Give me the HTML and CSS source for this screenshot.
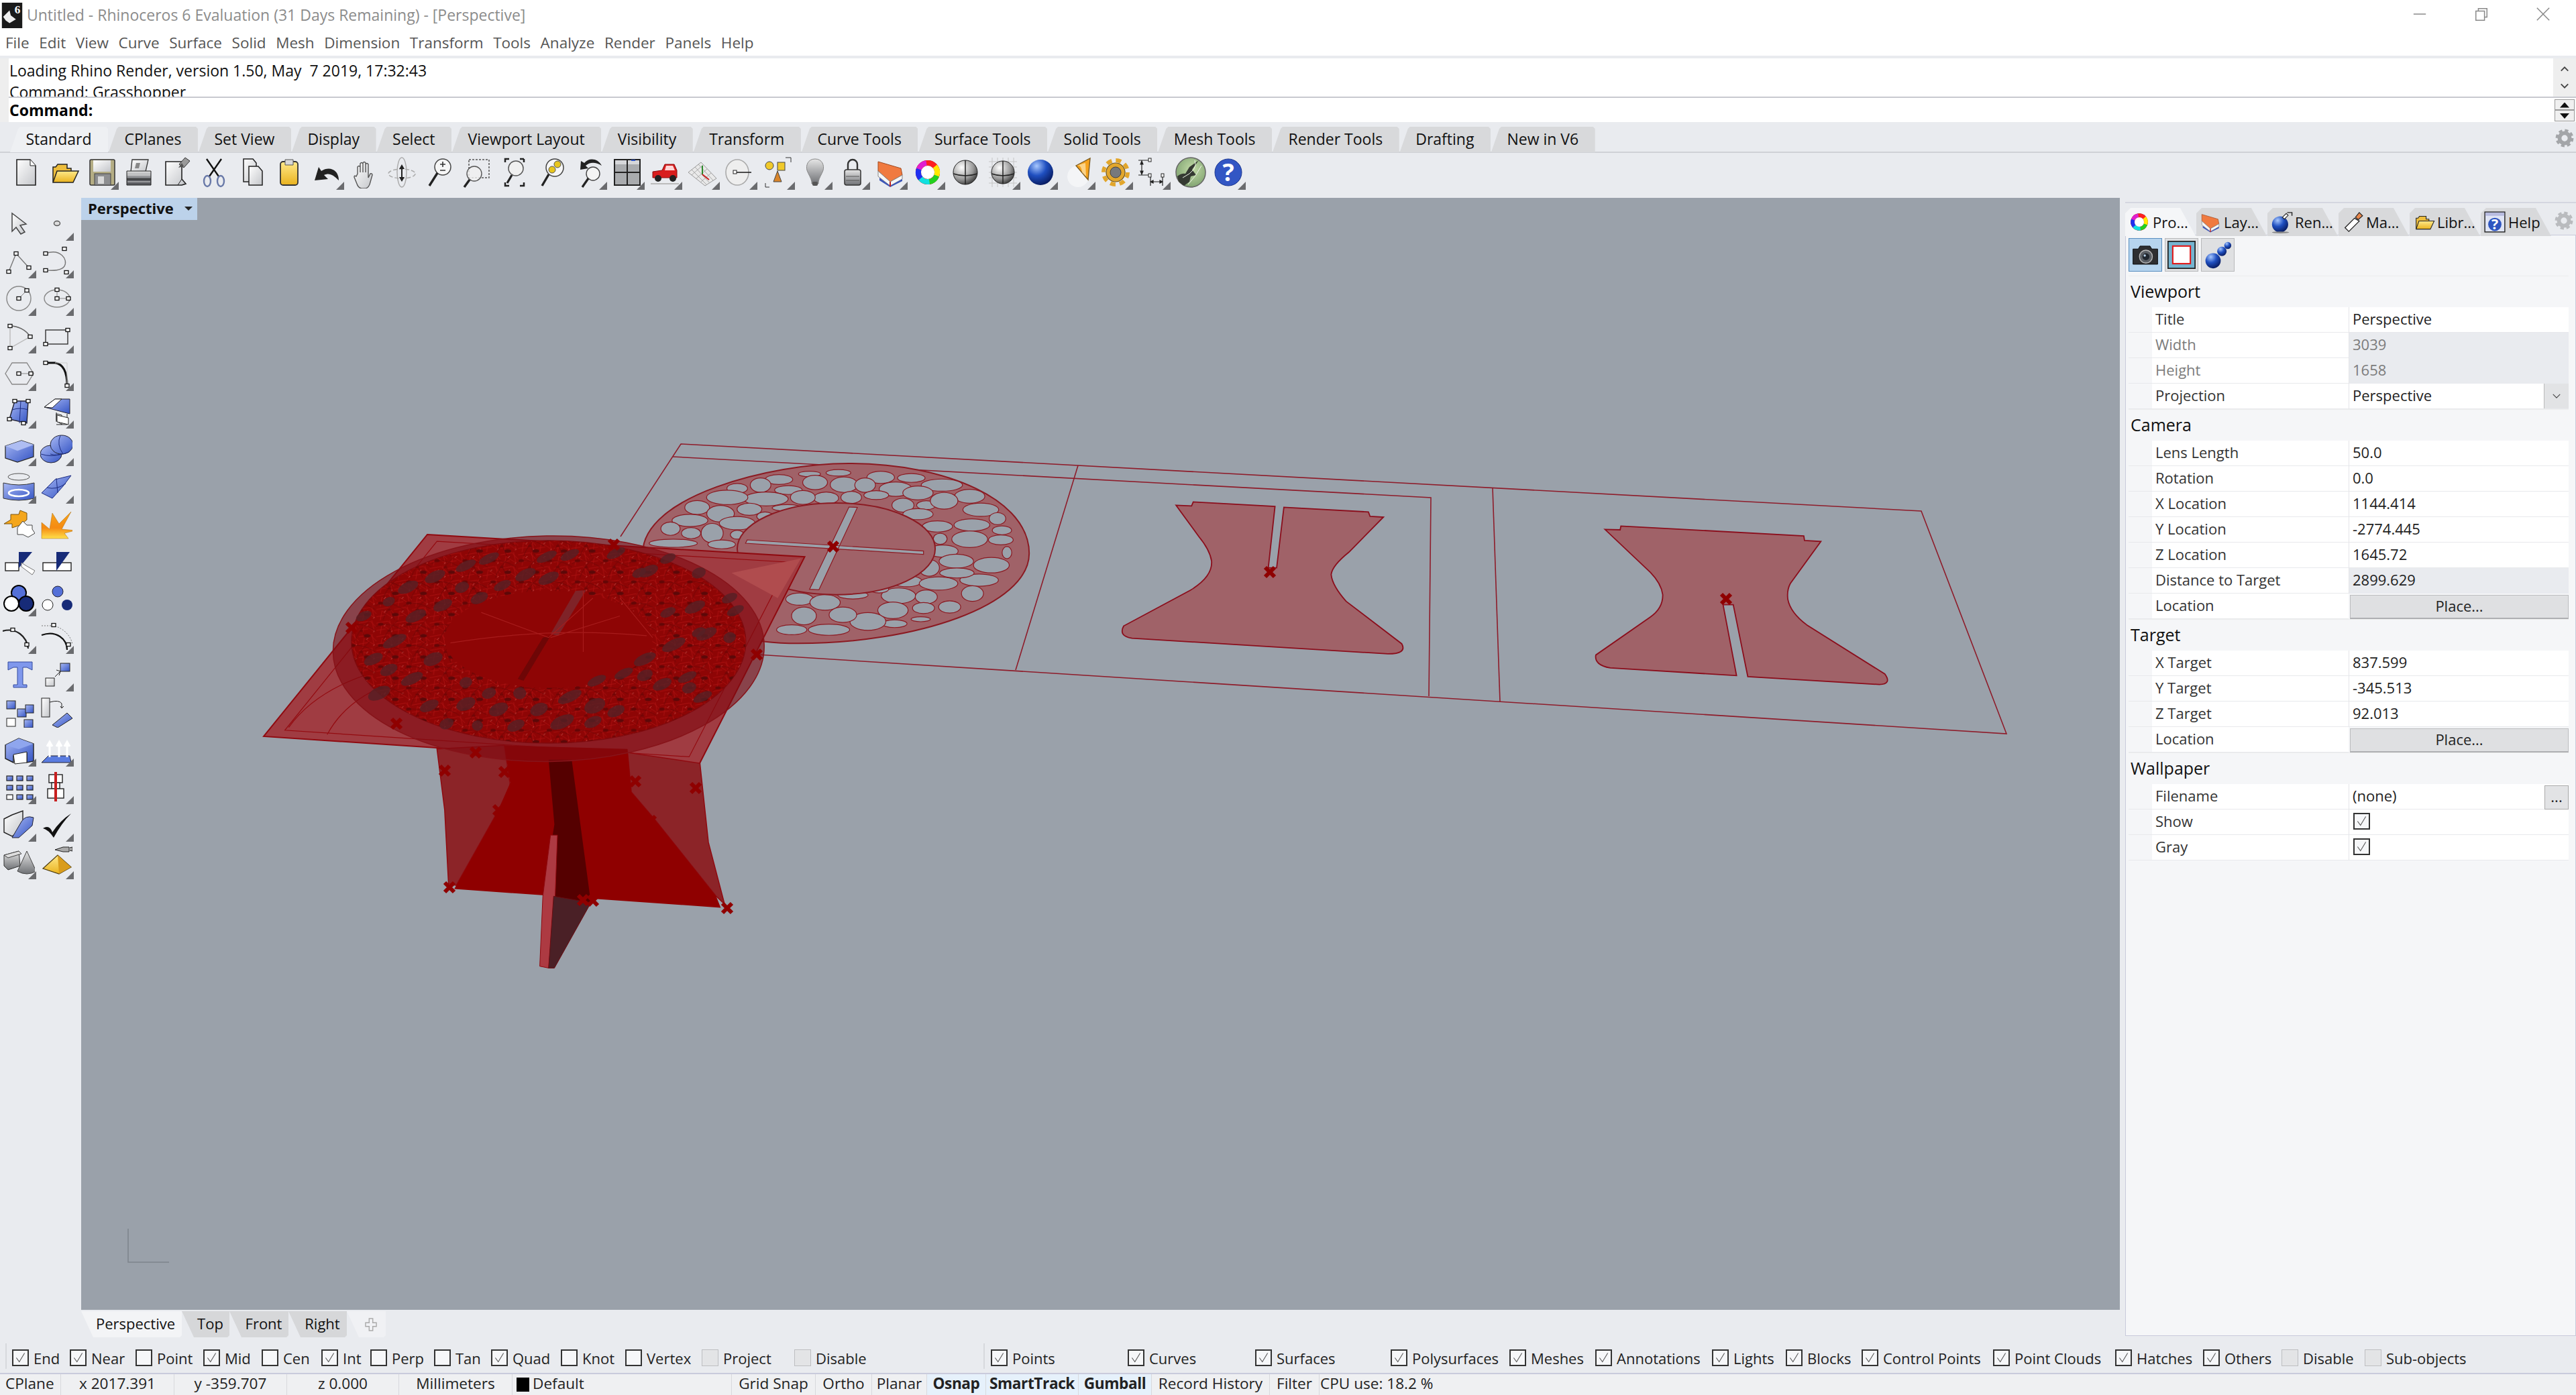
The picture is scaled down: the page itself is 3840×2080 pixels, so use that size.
FILE: index.html
```html
<!DOCTYPE html>
<html lang="en">
<head>
<meta charset="utf-8">
<title>Untitled - Rhinoceros 6 Evaluation</title>
<link rel="stylesheet" href="styles.css">
</head>
<body>
<svg class="defs" xmlns="http://www.w3.org/2000/svg">
<defs>
<linearGradient id="w" x1="0" y1="0" x2="1" y2="1"><stop offset="0" stop-color="#fff"/><stop offset="1" stop-color="#c4c6ca"/></linearGradient>
<linearGradient id="g" x1="0" y1="0" x2="0" y2="1"><stop offset="0" stop-color="#e6e6e6"/><stop offset="1" stop-color="#6f7175"/></linearGradient>
<linearGradient id="y" x1="0" y1="0" x2="0" y2="1"><stop offset="0" stop-color="#ffe98a"/><stop offset="1" stop-color="#e9b21e"/></linearGradient>
<linearGradient id="o" x1="0" y1="0" x2="0" y2="1"><stop offset="0" stop-color="#f7a51c"/><stop offset=".6" stop-color="#f58a12"/><stop offset="1" stop-color="#ffe04a"/></linearGradient>
<linearGradient id="b" x1="0" y1="0" x2="1" y2="1"><stop offset="0" stop-color="#a9b9f4"/><stop offset="1" stop-color="#3454c4"/></linearGradient>
<radialGradient id="sg" cx=".35" cy=".3" r=".8"><stop offset="0" stop-color="#fff"/><stop offset=".6" stop-color="#9a9a9a"/><stop offset="1" stop-color="#2a2a2a"/></radialGradient>
<radialGradient id="sb" cx=".35" cy=".25" r=".85"><stop offset="0" stop-color="#a8c8ff"/><stop offset=".45" stop-color="#1f4fc0"/><stop offset="1" stop-color="#04124f"/></radialGradient>
<radialGradient id="sgr" cx=".55" cy=".4" r=".7"><stop offset="0" stop-color="#c4dca8"/><stop offset=".8" stop-color="#86a876"/><stop offset="1" stop-color="#4f6a48"/></radialGradient>
<pattern id="wire" width="46" height="38" patternUnits="userSpaceOnUse"><path d="M0 8 30 2 46 20M10 38 14 12 40 30 34 0M0 28 24 24" fill="none" stroke="#b01212" stroke-width="1.4"/><path d="M20 16l4-5M38 33l3-4" stroke="#e88a80" stroke-width="1"/></pattern>
<pattern id="wire2" width="73" height="59" patternUnits="userSpaceOnUse"><path d="M0 20Q30 0 73 30M20 59Q28 30 60 0M50 59 36 24" fill="none" stroke="#6f0404" stroke-width="1.6"/><ellipse cx="14" cy="12" rx="7" ry="4" fill="#640606"/><ellipse cx="52" cy="44" rx="9" ry="5" fill="#5c0808"/><ellipse cx="36" cy="30" rx="5" ry="3" fill="#740505"/></pattern>

<symbol id="t0" viewBox="0 0 48 48"><path d="M10 5h20l8 9v29H10z" fill="url(#w)" stroke="#222" stroke-width="1.6"/><path d="M30 5v9h8" fill="#fff" stroke="#222"/></symbol>
<symbol id="t1" viewBox="0 0 48 48"><path d="M8 38V16h4l3-4h14v6h6v4" fill="#edbd3c" stroke="#222" stroke-width="1.5"/><path d="M8 39 14 22h32l-8 17z" fill="url(#y)" stroke="#222" stroke-width="1.5"/></symbol>
<symbol id="t2" viewBox="0 0 48 48"><rect x="7" y="5" width="37" height="38" rx="2" fill="#b4ad84" stroke="#333" stroke-width="1.5"/><rect x="12" y="6" width="26" height="17" fill="url(#w)"/><rect x="14" y="26" width="24" height="17" fill="#8d8e90" stroke="#444"/><rect x="19" y="30" width="9" height="11" fill="#d8d8d8"/></symbol>
<symbol id="t3" viewBox="0 0 48 48"><path d="M14 5h24l-4 18H12z" fill="url(#w)" stroke="#333" stroke-width="1.3"/><path d="M20 10l-2 8h6l2-8z" fill="#888"/><path d="M6 22h36v12H6z" fill="url(#g)" stroke="#222"/><path d="M6 34h36v9H6z" fill="#5b5c60" stroke="#222"/><path d="M7 28h34M7 38h34" stroke="#ddd"/></symbol>
<symbol id="t4" viewBox="0 0 48 48"><path d="M8 8h24v26l6 7-6 2H8z" fill="url(#w)" stroke="#222" stroke-width="1.6"/><path d="M32 34l-6 9" stroke="#222"/><path d="M28 12 37 2l7 5-9 10z" fill="#9a9a9a" stroke="#333"/><path d="M32 10l-5 7 8-2z" fill="#555"/></symbol>
<symbol id="t5" viewBox="0 0 48 48"><path d="M13 4 31 30M35 4 17 30" stroke="#111" stroke-width="2.4" fill="none"/><ellipse cx="14" cy="37" rx="5" ry="8" fill="none" stroke="#6979a8" stroke-width="2.4"/><ellipse cx="34" cy="37" rx="5" ry="8" fill="none" stroke="#6979a8" stroke-width="2.4"/></symbol>
<symbol id="t6" viewBox="0 0 48 48"><path d="M12 4h14l5 6v28H12z" fill="url(#w)" stroke="#222" stroke-width="1.5"/><path d="M20 15h14l6 7v21H20z" fill="url(#w)" stroke="#222" stroke-width="1.5"/></symbol>
<symbol id="t7" viewBox="0 0 48 48"><rect x="11" y="8" width="26" height="35" rx="4" fill="url(#y)" stroke="#333" stroke-width="1.8"/><path d="M18 5h12v8H18z" fill="#d8d8d8" stroke="#555"/></symbol>
<symbol id="t8" viewBox="0 0 48 48"><path d="M42 36C42 20 28 14 16 22L12 16 6 36l20-2-6-6c8-4 14 0 22 8z" fill="#222"/></symbol>
<symbol id="t9" viewBox="0 0 48 48"><path d="M14 26V16q2-3 4 0v8-13q2-3 4 0v13-14q2-3 4 0v14-12q2-3 4 0v20l3-6q3-1 3 2l-4 14q-2 5-6 6h-6q-5-1-7-7l-4-10q0-3 3-1z" fill="url(#w)" stroke="#555" stroke-width="1.4"/></symbol>
<symbol id="t10" viewBox="0 0 48 48"><ellipse cx="24" cy="24" rx="7" ry="22" fill="none" stroke="#aaa" stroke-width="1.4"/><ellipse cx="24" cy="26" rx="20" ry="7" fill="none" stroke="#aaa" stroke-width="1.4" stroke-dasharray="6 3"/><path d="M24 12l4 7h-8zM24 38l4-7h-8z" fill="#222"/><path d="M24 18v14" stroke="#222" stroke-width="2"/></symbol>
<symbol id="t11" viewBox="0 0 48 48"><circle cx="29" cy="16" r="12" fill="#f6f6f6" stroke="#444" stroke-width="1.5"/><path d="M21 25 9 44" stroke="#222" stroke-width="3.4"/><path d="M25 12h8M29 8v8M25 21h8" stroke="#333" stroke-width="1.6"/></symbol>
<symbol id="t12" viewBox="0 0 48 48"><rect x="12" y="5" width="30" height="27" fill="none" stroke="#555" stroke-dasharray="3 2" stroke-width="1.5"/><circle cx="20" cy="26" r="11" fill="#f0f0f0" fill-opacity=".8" stroke="#555" stroke-width="1.4"/><path d="M13 35 5 46" stroke="#222" stroke-width="3.4"/></symbol>
<symbol id="t13" viewBox="0 0 48 48"><path d="M10 9V4h6M38 4h-6M38 4v5M10 39v5h6M38 39v5h-6" fill="none" stroke="#222" stroke-width="2.5"/><circle cx="26" cy="18" r="11" fill="#f0f0f0" stroke="#555" stroke-width="1.5"/><path d="M20 28 13 40" stroke="#222" stroke-width="3.2"/></symbol>
<symbol id="t14" viewBox="0 0 48 48"><circle cx="28" cy="17" r="13" fill="#f6f6f6" stroke="#444" stroke-width="1.5"/><circle cx="32" cy="12" r="5" fill="#e8c61e" stroke="#555"/><circle cx="24" cy="20" r="5" fill="#e8c61e" stroke="#555"/><path d="M19 27 9 44" stroke="#222" stroke-width="3.4"/></symbol>
<symbol id="t15" viewBox="0 0 48 48"><path d="M42 14C36 2 22 2 16 10l-5-3-1 13 12-2-4-4c6-5 14-6 24 0z" fill="#222"/><circle cx="29" cy="26" r="10" fill="#f4f4f4" stroke="#444" stroke-width="1.4"/><path d="M22 33 13 46" stroke="#222" stroke-width="3.2"/></symbol>
<symbol id="t16" viewBox="0 0 48 48"><rect x="5" y="5" width="38" height="38" fill="#a9abae" stroke="#222" stroke-width="2"/><path d="M24 5v38M5 24h38" stroke="#222" stroke-width="2"/><path d="M6 6h17v6H6zM25 6h17v6H25z" fill="#d6d7da"/><path d="M30 5h6v2h-6z" fill="#2a50c0"/></symbol>
<symbol id="t17" viewBox="0 0 48 48"><path d="M6 32V23l14-2 4-9h14l4 9v11z" fill="#d81e1e" stroke="#8a0d0d"/><path d="M26 14h10l3 7H24z" fill="#ffd4d4"/><circle cx="14" cy="33" r="5" fill="#222"/><circle cx="36" cy="33" r="5" fill="#222"/><path d="M3 41h42" stroke="#bbb" stroke-width="2"/></symbol>
<symbol id="t18" viewBox="0 0 48 48"><path d="M3 24 22 9l23 24-17 11z" fill="#e9e9e9" stroke="#999"/><path d="M8 20l23 23M13 16l22 24M18 12l22 24M8 28 25 13M14 34 31 19M21 39 37 25" stroke="#aaa" fill="none"/><path d="M24 27V14" stroke="#2a8a2a" stroke-width="2"/><path d="M24 27l10 8" stroke="#c82020" stroke-width="2"/></symbol>
<symbol id="t19" viewBox="0 0 48 48"><ellipse cx="20" cy="24" rx="17" ry="19" fill="#eee" stroke="#aaa" stroke-width="1.6"/><rect x="14" y="21" width="5" height="5" fill="#fff" stroke="#222"/><path d="M19 24h22" stroke="#222" stroke-width="1.6"/></symbol>
<symbol id="t20" viewBox="0 0 48 48"><circle cx="12" cy="14" r="6" fill="#f0c92a" stroke="#444"/><rect x="24" y="9" width="11" height="12" fill="#f0c92a" stroke="#444"/><path d="M18 38l6-16 6 16z" fill="#d9852a" stroke="#444"/><path d="M36 2h8v7M6 40v6h6" fill="none" stroke="#333"/></symbol>
<symbol id="t21" viewBox="0 0 48 48"><path d="M24 4C13 4 10 14 12 21c2 6 6 11 7 17v3h10v-3c1-6 5-11 7-17 2-7-1-17-12-17z" fill="url(#g)" stroke="#888"/><rect x="20" y="38" width="8" height="6" rx="2" fill="#555"/></symbol>
<symbol id="t22" viewBox="0 0 48 48"><path d="M17 20V12a7 7 0 0 1 14 0v8" fill="none" stroke="#333" stroke-width="2.4"/><rect x="12" y="20" width="24" height="23" rx="3" fill="url(#g)" stroke="#333" stroke-width="1.5"/><path d="M14 30h20M14 36h20" stroke="#555"/></symbol>
<symbol id="t23" viewBox="0 0 48 48"><path d="M6 8 40 18l2 10-18 10L6 22z" fill="#f07a40" stroke="#a04a20"/><path d="M6 22l18 16 18-10v6L24 44 6 30z" fill="#f6f6f6" stroke="#888"/><path d="M8 32l16 12 18-10v3L24 46 8 36z" fill="#3a55b8"/><path d="M24 38v7" stroke="#c02020" stroke-width="2"/></symbol>
<symbol id="t24" viewBox="0 0 48 48"><circle cx="24" cy="24" r="18" fill="#222" opacity=".8"/><g fill="none" stroke-width="8"><circle cx="24" cy="24" r="14" stroke="#ff2020"/><circle cx="24" cy="24" r="14" stroke="#ffe900" stroke-dasharray="15 88" transform="rotate(-40 24 24)"/><circle cx="24" cy="24" r="14" stroke="#22d020" stroke-dasharray="15 88" transform="rotate(20 24 24)"/><circle cx="24" cy="24" r="14" stroke="#10e0e0" stroke-dasharray="15 88" transform="rotate(80 24 24)"/><circle cx="24" cy="24" r="14" stroke="#2030f0" stroke-dasharray="15 88" transform="rotate(140 24 24)"/><circle cx="24" cy="24" r="14" stroke="#e020d0" stroke-dasharray="15 88" transform="rotate(200 24 24)"/></g><circle cx="24" cy="24" r="10" fill="#fff"/></symbol>
<symbol id="t25" viewBox="0 0 48 48"><circle cx="24" cy="24" r="18" fill="url(#sg)" stroke="#222"/><path d="M24 6v36M6 26q18 6 36 0" stroke="#222" fill="none" stroke-width="1.5"/></symbol>
<symbol id="t26" viewBox="0 0 48 48"><path d="M3 8h42M3 16h42M3 24h42M3 32h42M3 40h42M8 2v44M16 2v44M24 2v44M32 2v44M40 2v44" stroke="#c5c5c5"/><circle cx="24" cy="24" r="17" fill="url(#sg)" stroke="#222"/><path d="M24 7v34M7 26q17 6 34 0" stroke="#222" fill="none" stroke-width="1.5"/></symbol>
<symbol id="t27" viewBox="0 0 48 48"><circle cx="24" cy="24" r="19" fill="url(#sb)"/></symbol>
<symbol id="t28" viewBox="0 0 48 48"><ellipse cx="24" cy="30" rx="16" ry="16" fill="#fff" opacity=".5"/><path d="M21 14 42 3l-3 32z" fill="#f5a21c" stroke="#7a5a20" stroke-width="1.4"/><path d="M21 14q8-3 9 10l6 6-1-20z" fill="#fff3cf" opacity=".6"/></symbol>
<symbol id="t29" viewBox="0 0 48 48"><circle cx="24" cy="24" r="14" fill="#e2a62c" stroke="#6c5420" stroke-width="1.2"/><circle cx="24" cy="24" r="18" fill="none" stroke="#e2a62c" stroke-width="6" stroke-dasharray="8 6.1"/><circle cx="24" cy="24" r="8" fill="#77797c" stroke="#444"/></symbol>
<symbol id="t30" viewBox="0 0 48 48"><path d="M2 6h16M2 28h16M7 6v22M7 7l-2 5h4zM7 27l-2-5h4zM20 28v16M38 28v16M20 38h18M20 38l4-2v4zM38 38l-4-2v4z" stroke="#222" fill="#222" stroke-width="1.2"/><rect x="17" y="3" width="4" height="5" fill="#fff" stroke="#222"/><rect x="17" y="26" width="4" height="5" fill="#fff" stroke="#222"/><rect x="36" y="26" width="4" height="5" fill="#fff" stroke="#222"/></symbol>
<symbol id="t31" viewBox="0 0 48 48"><circle cx="24" cy="24" r="22" fill="url(#sgr)" stroke="#666" stroke-width="1.5"/><path d="M4 30q6-5 12-4l6-10 14-10-10 14 6 8-8 2-2 8-8 6-8-6z" fill="#353a32"/><path d="M30 6q6 14-18 26M40 14q-8 16-20 28" stroke="#eef4e8" fill="none"/></symbol>
<symbol id="t32" viewBox="0 0 48 48"><circle cx="24" cy="24" r="20" fill="#3256c4" stroke="#1c3690"/><text x="24" y="37" text-anchor="middle" class="qm">?</text></symbol>

<symbol id="p2" viewBox="0 0 48 48"><circle cx="21" cy="29" r="17" fill="url(#sb)"/><path d="M26 14 34 6l4 4-8 8z" fill="#fff" stroke="#222" stroke-width="1.5"/><path d="M36 4h10v7" fill="none" stroke="#222" stroke-width="2"/><ellipse cx="22" cy="46" rx="18" ry="2" fill="#888"/></symbol>
<symbol id="p3" viewBox="0 0 48 48"><path d="M8 36 28 16l10 6-22 22z" fill="#fff" stroke="#222" stroke-width="1.8"/><path d="M30 14l8-10 7 7-9 8z" fill="#e8874c" stroke="#222" stroke-width="1.6"/></symbol>
<symbol id="p5" viewBox="0 0 48 48"><rect x="3" y="3" width="42" height="42" fill="#dfe4f4" stroke="#222" stroke-width="2"/><rect x="4" y="4" width="40" height="7" fill="#b8bce0"/><circle cx="24" cy="29" r="14" fill="#2e55c0"/><text x="24" y="40" text-anchor="middle" class="qm2">?</text></symbol>
<symbol id="cam" viewBox="0 0 48 48"><path d="M3 14h9l3-5h17l3 5h10v26H3z" fill="#2e2e30" stroke="#000"/><circle cx="25" cy="27" r="11" fill="#5c6066" stroke="#bbb" stroke-width="1.5"/><circle cx="25" cy="27" r="6" fill="#20262e"/><circle cx="23" cy="25" r="2" fill="#b8d0e8"/></symbol>
<symbol id="frm" viewBox="0 0 48 48"><rect x="1" y="1" width="46" height="46" fill="#74b4d0" stroke="#222" stroke-width="2"/><rect x="9" y="9" width="30" height="30" fill="#fff" stroke="#e01818" stroke-width="2.4"/></symbol>
<symbol id="sph" viewBox="0 0 48 48"><circle cx="16" cy="34" r="13" fill="url(#sb)"/><circle cx="31" cy="18" r="8" fill="url(#sb)"/><circle cx="41" cy="8" r="6" fill="url(#sb)"/></symbol>
<symbol id="gear" viewBox="0 0 48 48"><circle cx="24" cy="24" r="13" fill="none" stroke="currentColor" stroke-width="10"/><circle cx="24" cy="24" r="20" fill="none" stroke="currentColor" stroke-width="6" stroke-dasharray="9 6.7"/></symbol>

<g id="cp"><rect x="-3" y="-2.5" width="6" height="5" fill="#fff" stroke="#111" stroke-width="1.3"/></g>
<symbol id="l0" viewBox="0 0 48 48"><path d="M14 9V36l6-6 7 10 6-3-7-10 9-2z" fill="url(#w)" stroke="#444" stroke-width="1.5"/></symbol>
<symbol id="l1" viewBox="0 0 48 48"><ellipse cx="25" cy="24" rx="4.5" ry="3.5" fill="#ddd" stroke="#555" stroke-width="1.4"/></symbol>
<symbol id="l2" viewBox="0 0 48 48"><path d="M9 40 20 13l19 21" fill="none" stroke="#777" stroke-width="1.4"/><use href="#cp" x="9" y="40"/><use href="#cp" x="20" y="13"/><use href="#cp" x="39" y="34"/></symbol>
<symbol id="l3" viewBox="0 0 48 48"><path d="M8 13C30 5 42 22 36 32 30 40 15 38 8 38" fill="none" stroke="#777" stroke-width="1.4"/><use href="#cp" x="8" y="13"/><use href="#cp" x="36" y="6"/><use href="#cp" x="8" y="38"/><use href="#cp" x="39" y="41"/></symbol>
<symbol id="l4" viewBox="0 0 48 48"><circle cx="24" cy="24" r="18" fill="none" stroke="#888" stroke-width="1.4"/><path d="M24 24 36 12" stroke="#888"/><use href="#cp" x="24" y="24"/><use href="#cp" x="36" y="12"/></symbol>
<symbol id="l5" viewBox="0 0 48 48"><ellipse cx="25" cy="24" rx="19" ry="13" fill="none" stroke="#888" stroke-width="1.4"/><path d="M25 11V24H42" stroke="#888" fill="none"/><use href="#cp" x="25" y="11"/><use href="#cp" x="25" y="24"/><use href="#cp" x="42" y="24"/></symbol>
<symbol id="l6" viewBox="0 0 48 48"><path d="M11 42 11 9C22 9 34 14 41 25z" fill="none" stroke="#bbb" stroke-width="1.4"/><path d="M11 9C22 9 34 14 41 25" fill="none" stroke="#666" stroke-width="1.4"/><use href="#cp" x="11" y="9"/><use href="#cp" x="41" y="25"/><use href="#cp" x="11" y="42"/></symbol>
<symbol id="l7" viewBox="0 0 48 48"><rect x="8" y="15" width="33" height="21" fill="none" stroke="#333" stroke-width="1.4"/><use href="#cp" x="8" y="36"/><use href="#cp" x="41" y="15"/></symbol>
<symbol id="l8" viewBox="0 0 48 48"><path d="M4 24 14 8h22l10 16-10 16H14z" fill="none" stroke="#888" stroke-width="1.4"/><path d="M24 24H42" stroke="#888"/><use href="#cp" x="24" y="24"/><use href="#cp" x="42" y="24"/></symbol>
<symbol id="l9" viewBox="0 0 48 48"><path d="M8 8H22C36 10 40 24 40 42" fill="none" stroke="#111" stroke-width="3"/><path d="M22 8H40V42" fill="none" stroke="#ccc"/><use href="#cp" x="8" y="8"/><use href="#cp" x="40" y="42"/></symbol>
<symbol id="l10" viewBox="0 0 48 48"><path d="M10 36 18 9 38 9 36 42z" fill="url(#b)" stroke="#223" stroke-width="1.4"/><path d="M14 22Q26 18 38 22M27 9 25 42" stroke="#1c2c80" fill="none"/><use href="#cp" x="18" y="9"/><use href="#cp" x="38" y="9"/><use href="#cp" x="10" y="36"/><use href="#cp" x="31" y="42"/></symbol>
<symbol id="l11" viewBox="0 0 48 48"><path d="M6 18 22 6H44V28Z" fill="url(#b)" stroke="#223"/><path d="M6 18 22 6H32L18 19z" fill="#fff" stroke="#222"/><path d="M24 28 32 30V44L24 38z" fill="#fff" stroke="#222"/><path d="M24 26v14M40 28v16H24" fill="none" stroke="#222"/><path d="M25 40 42 44V34L25 30z" fill="#fff" stroke="#222"/></symbol>
<symbol id="l12" viewBox="0 0 48 48"><path d="M4 20 28 12 46 18V36L22 44 4 38z" fill="url(#b)" stroke="#222" stroke-width="1.2"/><path d="M4 20 22 27 46 18" fill="none" stroke="#8ca0e8"/><path d="M4 20 28 12 46 18 22 27z" fill="#aebdf2"/></symbol>
<symbol id="l13" viewBox="0 0 48 48"><ellipse cx="16" cy="32" rx="16" ry="13" fill="url(#b)" stroke="#223"/><ellipse cx="32" cy="18" rx="17" ry="14" fill="url(#b)" stroke="#223"/><path d="M15 32q10 4 28-3M30 4Q24 18 34 32M1 32q15 5 30 0" fill="none" stroke="#1c2c80"/></symbol>
<symbol id="l14" viewBox="0 0 48 48"><ellipse cx="24" cy="10" rx="16" ry="5" fill="none" stroke="#555"/><path d="M1 19q23 6 46 0V42q-23 6-46 0z" fill="url(#b)" stroke="#333"/><ellipse cx="24" cy="34" rx="15" ry="5" fill="none" stroke="#fff" stroke-width="2.5"/></symbol>
<symbol id="l15" viewBox="0 0 48 48"><path d="M2 34 22 14 46 8 34 24 18 42z" fill="url(#b)" stroke="#1c2c80"/><path d="M10 26Q24 30 38 20M24 12 26 34" stroke="#1c2c80" fill="none"/></symbol>
<symbol id="l16" viewBox="0 0 48 48"><path d="M2 24 12 18V10H24L26 4 36 8V18L26 26 14 30V24z" fill="#f4a61c" stroke="#7a5410"/><path d="M22 30 30 20 36 26H44V32L48 38 38 44 30 40H22z" fill="#fff" stroke="#444"/></symbol>
<symbol id="l17" viewBox="0 0 48 48"><path d="M2 46V22L14 32 18 8 28 24 46 6 32 32 52 34 36 38 42 46z" fill="url(#o)" stroke="#a86b0c" stroke-width=".5"/></symbol>
<symbol id="l18" viewBox="0 0 48 48"><rect x="4" y="26" width="20" height="12" fill="#fff" stroke="#222" stroke-width="1.4"/><path d="M24 10H44L24 34z" fill="#172b78"/><path d="M28 26 34 30 48 38 44 44 28 32z" fill="#fff" stroke="#777"/></symbol>
<symbol id="l19" viewBox="0 0 48 48"><rect x="4" y="26" width="42" height="12" fill="#fff" stroke="#222" stroke-width="1.4"/><path d="M24 10H44L24 38z" fill="#172b78"/></symbol>
<symbol id="l20" viewBox="0 0 48 48"><circle cx="24" cy="15" r="11" fill="#5470d8" stroke="#000" stroke-width="2"/><circle cx="13" cy="31" r="11" fill="#fff" stroke="#000" stroke-width="2"/><circle cx="35" cy="31" r="11" fill="#172b78" stroke="#000" stroke-width="2"/></symbol>
<symbol id="l21" viewBox="0 0 48 48"><circle cx="26" cy="13" r="8" fill="#5470d8" stroke="#223"/><circle cx="11" cy="33" r="8" fill="#fff" stroke="#222"/><circle cx="40" cy="33" r="8" fill="#172b78"/></symbol>
<symbol id="l22" viewBox="0 0 48 48"><path d="M0 16C20 10 36 24 38 42" fill="none" stroke="#222" stroke-width="2.2"/><use href="#cp" x="15" y="14"/><use href="#cp" x="36" y="36"/></symbol>
<symbol id="l23" viewBox="0 0 48 48"><path d="M2 22C24 14 40 28 40 44" fill="none" stroke="#111" stroke-width="2.2"/><path d="M2 8H20C36 12 46 24 48 36" fill="none" stroke="#777" stroke-dasharray="2 2"/><use href="#cp" x="20" y="7"/><use href="#cp" x="42" y="36"/></symbol>
<symbol id="l24" viewBox="0 0 48 48"><path d="M8 6H44V18L36 14H30V40H36V44H16V40H22V14H16L8 18z" fill="#7f97ec" stroke="#334a9e"/></symbol>
<symbol id="l25" viewBox="0 0 48 48"><rect x="8" y="30" width="13" height="12" fill="url(#w)" stroke="#222"/><rect x="30" y="8" width="14" height="12" fill="url(#b)" stroke="#222"/><path d="M22 28 30 20M24 18l6 2-2 6" stroke="#222" fill="none"/></symbol>
<symbol id="l26" viewBox="0 0 48 48"><rect x="6" y="8" width="13" height="12" fill="url(#b)" stroke="#222"/><rect x="6" y="34" width="13" height="12" fill="#fff" stroke="#222"/><rect x="22" y="20" width="13" height="12" fill="url(#b)" stroke="#222"/><rect x="34" y="14" width="12" height="12" fill="url(#b)" stroke="#222"/><rect x="32" y="36" width="13" height="12" fill="url(#b)" stroke="#222"/></symbol>
<symbol id="l27" viewBox="0 0 48 48"><rect x="2" y="4" width="12" height="28" fill="url(#w)" stroke="#222"/><path d="M14 10Q28 6 32 12V18M30 16l2 3 3-3" stroke="#222" fill="none"/><path d="M18 44 40 26 48 34 26 48z" fill="url(#b)" stroke="#222"/></symbol>
<symbol id="l28" viewBox="0 0 48 48"><path d="M4 18 24 8 46 16V42L36 44V30L16 34V44L4 38z" fill="url(#b)" stroke="#222" stroke-width="1.4"/><path d="M4 18 24 8 46 16 24 24z" fill="#8fa6ee"/><path d="M16 32 36 28V44L18 46z" fill="#fff" stroke="#222"/></symbol>
<symbol id="l29" viewBox="0 0 48 48"><path d="M2 44 12 34H44L46 44z" fill="#5a7ce0" stroke="#223"/><path d="M14 36V16M10 20l4-7 4 7M28 36V16M24 20l4-7 4 7M40 36V16M36 20l4-7 4 7" stroke="#fff" stroke-width="3" fill="#fff"/></symbol>
<symbol id="l30" viewBox="0 0 48 48"><g stroke="#222" stroke-width="1.2"><rect x="6" y="8" width="9" height="7" fill="url(#b)"/><rect x="21" y="8" width="9" height="7" fill="url(#b)"/><rect x="36" y="8" width="9" height="7" fill="url(#b)"/><rect x="6" y="22" width="9" height="7" fill="url(#b)"/><rect x="21" y="22" width="9" height="7" fill="url(#b)"/><rect x="36" y="22" width="9" height="7" fill="url(#b)"/><rect x="6" y="36" width="9" height="7" fill="#fff"/><rect x="21" y="36" width="9" height="7" fill="url(#b)"/><rect x="36" y="36" width="9" height="7" fill="url(#b)"/></g></symbol>
<symbol id="l31" viewBox="0 0 48 48"><g fill="#fff" stroke="#222" stroke-width="1.4"><rect x="13" y="6" width="20" height="12"/><rect x="17" y="18" width="12" height="9"/><rect x="11" y="27" width="24" height="14"/></g><path d="M23 2V46" stroke="#c82020" stroke-width="4"/></symbol>
<symbol id="l32" viewBox="0 0 48 48"><path d="M2 16 14 10 30 4V30L14 42 2 36z" fill="url(#w)" stroke="#222" stroke-width="1.4"/><path d="M14 44 28 20Q34 10 46 14L44 26 24 44z" fill="url(#b)" stroke="#223"/></symbol>
<symbol id="l33" viewBox="0 0 48 48"><path d="M4 30Q14 24 18 36 30 18 46 8 32 22 20 44 12 32 4 30z" fill="#111"/></symbol>
<symbol id="l34" viewBox="0 0 48 48"><path d="M2 14 24 8 26 30 8 36 2 30z" fill="url(#g)" stroke="#333"/><path d="M2 14 24 8 28 12 8 18z" fill="#ddd" stroke="#444"/><path d="M22 38 36 8 50 38q-14 8-28 0z" fill="url(#g)" stroke="#444"/></symbol>
<symbol id="l35" viewBox="0 0 48 48"><path d="M4 34 26 14 46 32 28 42z" fill="url(#y)" stroke="#4a3a10" stroke-width="1.2"/><path d="M26 14 28 42 46 32z" fill="#d99c1c"/><path d="M22 6 34 2h9V9H34zM44 3l4-1V8l-4-1" fill="#aaa" stroke="#222"/></symbol>
<g id="xm"><path d="M-7-7 7 7M7-7-7 7" stroke="#8f0000" stroke-width="6" fill="none"/></g>
</defs>
</svg>

<div class="app">
<header class="titlebar">
<svg class="logo" viewBox="0 0 32 40"><rect width="32" height="40" fill="#1a1a1a"/><path d="M2 22 12 12 14 20 22 26 12 32 6 28z" fill="#eee"/><text x="20" y="17" class="six">6</text></svg>
<span class="title">Untitled - Rhinoceros 6 Evaluation (31 Days Remaining) - [Perspective]</span>
<span class="winctl">
<svg class="wc" viewBox="0 0 24 24"><path d="M2 12H22" /></svg>
<svg class="wc" viewBox="0 0 24 24"><path d="M3 7H17V22H3zM7 7V3H21V17H17"/></svg>
<svg class="wc" viewBox="0 0 24 24"><path d="M2 2 22 22M22 2 2 22"/></svg>
</span>
</header>
<nav class="menubar"><span>File</span><span>Edit</span><span>View</span><span>Curve</span><span>Surface</span><span>Solid</span><span>Mesh</span><span>Dimension</span><span>Transform</span><span>Tools</span><span>Analyze</span><span>Render</span><span>Panels</span><span>Help</span></nav>

<section class="cmd">
<div class="hist"><div class="histtext"><div>Loading Rhino Render, version 1.50, May  7 2019, 17:32:43</div><div>Command: Grasshopper</div></div>
<div class="histscroll"><svg class="chev" viewBox="0 0 16 10"><path d="M2 8 8 2l6 6"/></svg><svg class="chev" viewBox="0 0 16 10"><path d="M2 2l6 6 6-6"/></svg></div></div>
<div class="prompt"><b>Command:</b><div class="spin"><span class="up"></span><span class="dn"></span></div></div>
</section>

<div class="tabs">
<span class="tab on">Standard</span><span class="tab">CPlanes</span><span class="tab">Set View</span><span class="tab">Display</span><span class="tab">Select</span><span class="tab">Viewport Layout</span><span class="tab">Visibility</span><span class="tab">Transform</span><span class="tab">Curve Tools</span><span class="tab">Surface Tools</span><span class="tab">Solid Tools</span><span class="tab">Mesh Tools</span><span class="tab">Render Tools</span><span class="tab">Drafting</span><span class="tab">New in V6</span>
<svg class="tabgear" viewBox="0 0 48 48"><use href="#gear"/></svg>
</div>

<div class="toolbar">
<i class="b"><svg><use href="#t0"/></svg></i><i class="b"><svg><use href="#t1"/></svg></i><i class="b f"><svg><use href="#t2"/></svg></i><i class="b"><svg><use href="#t3"/></svg></i><i class="b"><svg><use href="#t4"/></svg></i><i class="b"><svg><use href="#t5"/></svg></i><i class="b"><svg><use href="#t6"/></svg></i><i class="b"><svg><use href="#t7"/></svg></i><i class="b f"><svg><use href="#t8"/></svg></i><i class="b"><svg><use href="#t9"/></svg></i><i class="b"><svg><use href="#t10"/></svg></i><i class="b"><svg><use href="#t11"/></svg></i><i class="b"><svg><use href="#t12"/></svg></i><i class="b"><svg><use href="#t13"/></svg></i><i class="b"><svg><use href="#t14"/></svg></i><i class="b f"><svg><use href="#t15"/></svg></i><i class="b f"><svg><use href="#t16"/></svg></i><i class="b f"><svg><use href="#t17"/></svg></i><i class="b f"><svg><use href="#t18"/></svg></i><i class="b f"><svg><use href="#t19"/></svg></i><i class="b f"><svg><use href="#t20"/></svg></i><i class="b f"><svg><use href="#t21"/></svg></i><i class="b f"><svg><use href="#t22"/></svg></i><i class="b f"><svg><use href="#t23"/></svg></i><i class="b f"><svg><use href="#t24"/></svg></i><i class="b"><svg><use href="#t25"/></svg></i><i class="b f"><svg><use href="#t26"/></svg></i><i class="b f"><svg><use href="#t27"/></svg></i><i class="b f"><svg><use href="#t28"/></svg></i><i class="b f"><svg><use href="#t29"/></svg></i><i class="b f"><svg><use href="#t30"/></svg></i><i class="b"><svg><use href="#t31"/></svg></i><i class="b f"><svg><use href="#t32"/></svg></i>
</div>

<div class="main">
<aside class="lefttb">
<i class="b"><svg><use href="#l0"/></svg></i><i class="b f"><svg><use href="#l1"/></svg></i><i class="b f"><svg><use href="#l2"/></svg></i><i class="b f"><svg><use href="#l3"/></svg></i><i class="b f"><svg><use href="#l4"/></svg></i><i class="b f"><svg><use href="#l5"/></svg></i><i class="b f"><svg><use href="#l6"/></svg></i><i class="b f"><svg><use href="#l7"/></svg></i><i class="b f"><svg><use href="#l8"/></svg></i><i class="b f"><svg><use href="#l9"/></svg></i><i class="b f"><svg><use href="#l10"/></svg></i><i class="b f"><svg><use href="#l11"/></svg></i><i class="b f"><svg><use href="#l12"/></svg></i><i class="b f"><svg><use href="#l13"/></svg></i><i class="b f"><svg><use href="#l14"/></svg></i><i class="b f"><svg><use href="#l15"/></svg></i><i class="b"><svg><use href="#l16"/></svg></i><i class="b"><svg><use href="#l17"/></svg></i><i class="b"><svg><use href="#l18"/></svg></i><i class="b"><svg><use href="#l19"/></svg></i><i class="b f"><svg><use href="#l20"/></svg></i><i class="b"><svg><use href="#l21"/></svg></i><i class="b f"><svg><use href="#l22"/></svg></i><i class="b f"><svg><use href="#l23"/></svg></i><i class="b"><svg><use href="#l24"/></svg></i><i class="b f"><svg><use href="#l25"/></svg></i><i class="b"><svg><use href="#l26"/></svg></i><i class="b"><svg><use href="#l27"/></svg></i><i class="b f"><svg><use href="#l28"/></svg></i><i class="b f"><svg><use href="#l29"/></svg></i><i class="b f"><svg><use href="#l30"/></svg></i><i class="b f"><svg><use href="#l31"/></svg></i><i class="b f"><svg><use href="#l32"/></svg></i><i class="b f"><svg><use href="#l33"/></svg></i><i class="b f"><svg><use href="#l34"/></svg></i><i class="b f"><svg><use href="#l35"/></svg></i>
</aside>

<div class="center">
<div class="viewport">
<div class="vtab"><b>Perspective</b><span class="vcaret"></span></div>
<svg class="scene" viewBox="121 295 3039 1658">
  <g class="wire">
    <path d="M925 800 1015 662 2864 762 2991 1094 1129 976"/>
    <path d="M1003 681 2133 742 2130 1038"/>
    <path d="M1607 694 1514 999"/>
    <path d="M2225 727 2236 1046"/>
  </g>
  <g transform="matrix(.829 0 0 .3333 900 640)">
    <g class="plate"><path d="M70 555C70 300 300 153 440 153 620 153 765 320 765 555 765 790 560 958 350 958 170 958 70 760 70 555z"/></g>
    <g class="holes">
      <ellipse cx="370" cy="200" rx="16" ry="10"/><ellipse cx="422" cy="195" rx="18" ry="12"/><ellipse cx="498" cy="215" rx="20" ry="22"/><ellipse cx="553" cy="218" rx="20" ry="16"/><ellipse cx="608" cy="250" rx="30" ry="22"/><ellipse cx="658" cy="300" rx="22" ry="25"/><ellipse cx="678" cy="360" rx="26" ry="24"/><ellipse cx="708" cy="400" rx="12" ry="22"/><ellipse cx="716" cy="452" rx="14" ry="16"/><ellipse cx="714" cy="495" rx="18" ry="18"/><ellipse cx="725" cy="552" rx="7" ry="22"/><ellipse cx="697" cy="608" rx="26" ry="28"/><ellipse cx="675" cy="675" rx="28" ry="22"/><ellipse cx="663" cy="735" rx="16" ry="28"/><ellipse cx="622" cy="795" rx="16" ry="22"/><ellipse cx="570" cy="850" rx="14" ry="9"/><ellipse cx="523" cy="870" rx="18" ry="14"/><ellipse cx="475" cy="860" rx="26" ry="32"/><ellipse cx="405" cy="897" rx="30" ry="20"/><ellipse cx="338" cy="897" rx="22" ry="18"/>
      <ellipse cx="315" cy="225" rx="20" ry="18"/><ellipse cx="282" cy="250" rx="15" ry="26"/><ellipse cx="240" cy="265" rx="15" ry="18"/><ellipse cx="332" cy="272" rx="20" ry="16"/><ellipse cx="380" cy="238" rx="18" ry="26"/><ellipse cx="432" cy="248" rx="20" ry="28"/><ellipse cx="470" cy="250" rx="15" ry="26"/><ellipse cx="525" cy="268" rx="24" ry="26"/><ellipse cx="565" cy="285" rx="22" ry="25"/><ellipse cx="580" cy="340" rx="14" ry="16"/><ellipse cx="612" cy="320" rx="20" ry="30"/><ellipse cx="538" cy="340" rx="16" ry="25"/><ellipse cx="490" cy="295" rx="18" ry="16"/><ellipse cx="400" cy="308" rx="18" ry="22"/><ellipse cx="445" cy="305" rx="15" ry="22"/><ellipse cx="358" cy="305" rx="18" ry="25"/><ellipse cx="292" cy="312" rx="32" ry="25"/><ellipse cx="222" cy="305" rx="30" ry="26"/><ellipse cx="168" cy="350" rx="18" ry="25"/><ellipse cx="210" cy="378" rx="20" ry="30"/><ellipse cx="262" cy="358" rx="18" ry="22"/><ellipse cx="330" cy="352" rx="22" ry="12"/><ellipse cx="290" cy="390" rx="12" ry="16"/><ellipse cx="240" cy="420" rx="26" ry="24"/><ellipse cx="155" cy="408" rx="26" ry="22"/><ellipse cx="120" cy="445" rx="14" ry="24"/><ellipse cx="157" cy="465" rx="14" ry="20"/><ellipse cx="195" cy="465" rx="16" ry="35"/><ellipse cx="240" cy="472" rx="10" ry="16"/><ellipse cx="212" cy="515" rx="20" ry="16"/><ellipse cx="125" cy="510" rx="35" ry="15"/>
      <ellipse cx="565" cy="380" rx="22" ry="20"/><ellipse cx="600" cy="435" rx="22" ry="20"/><ellipse cx="662" cy="428" rx="26" ry="22"/><ellipse cx="658" cy="492" rx="26" ry="30"/><ellipse cx="605" cy="490" rx="10" ry="20"/><ellipse cx="610" cy="545" rx="22" ry="22"/><ellipse cx="634" cy="590" rx="25" ry="25"/><ellipse cx="585" cy="620" rx="15" ry="30"/><ellipse cx="635" cy="643" rx="25" ry="18"/><ellipse cx="545" cy="680" rx="22" ry="20"/><ellipse cx="602" cy="690" rx="28" ry="24"/><ellipse cx="530" cy="745" rx="25" ry="28"/><ellipse cx="580" cy="750" rx="16" ry="25"/><ellipse cx="495" cy="715" rx="14" ry="14"/><ellipse cx="448" cy="742" rx="22" ry="14"/><ellipse cx="352" cy="760" rx="20" ry="22"/><ellipse cx="398" cy="775" rx="22" ry="28"/><ellipse cx="430" cy="830" rx="20" ry="28"/><ellipse cx="360" cy="835" rx="18" ry="32"/><ellipse cx="520" cy="810" rx="22" ry="30"/><ellipse cx="575" cy="800" rx="16" ry="20"/>
    </g>
    <g class="plate"><ellipse cx="418" cy="535" rx="178" ry="205"/></g>
    <path class="slot" d="M258 495 575 545 575 560 255 510zM441 348 456 350 387 718 370 716z"/>
    <path class="plate2" d="M1029 340 1057 343 1060 325 1207 345 1195 620 1210 620 1223 349 1375 370 1378 390 1402 393 1340 550Q1310 610 1308 650 1310 700 1335 770L1435 960Q1445 1005 1410 1005L950 935Q925 925 935 880L1055 720Q1095 660 1093 590 1090 540 1070 480z"/>
  </g>
  <g transform="matrix(.542 0 0 .3333 2200 680)">
    <path class="plate2" d="M355 328 397 330 399 313 902 357 904 378 949 382 865 570Q855 600 858 640 865 700 910 755L1125 975Q1145 1020 1110 1022L748 987 708 665 680 665 717 982 370 948Q325 935 330 890L480 720Q515 680 514 620 510 570 480 520z"/>
  </g>
  <g transform="matrix(.574 0 0 .5356 350 640)">
    <path class="t-plate" d="M500 293 1480 355 1205 935 75 855z"/>
    <path class="t-line" d="M525 312 1440 370 1180 912 130 838zM140 830Q240 680 520 640M240 850Q300 730 460 690"/>
    <path class="t-corner" d="M1290 400 1470 360 1410 470z"/>
    <path class="t-flank" d="M525 890 545 1060 555 1265 575 1270 685 1060 715 990 700 880z"/>
    <path class="t-flank" d="M1020 900 1030 1010 1090 1085 1250 1300 1272 1322 1230 1150 1208 930z"/>
    <path class="t-solid" d="M570 1280 685 1060 715 985 700 880 1020 890 1030 1010 1090 1085 1250 1300 1262 1332z"/>
    <path class="t-leg" d="M800 1300 830 1100 815 920 875 920 925 1320z"/>
    <path class="t-lit" d="M800 1300 820 1130 838 1130 832 1300 815 1500 792 1495z"/>
    <path class="t-foot" d="M828 1300 925 1318 830 1500 815 1500z"/>
    <ellipse class="t-disc" cx="815" cy="611" rx="560" ry="314" transform="rotate(-1 815 611)"/>
    <ellipse class="t-disc2" cx="815" cy="592" rx="512" ry="282"/>
    <path class="t-ring" fill-rule="evenodd" d="M303 592a512 282 0 1 0 1024 0a512 282 0 1 0-1024 0zM545 585a270 135 0 1 0 540 0a270 135 0 1 0-540 0z"/>
    <path class="t-ring2" fill-rule="evenodd" d="M303 592a512 282 0 1 0 1024 0a512 282 0 1 0-1024 0zM545 585a270 135 0 1 0 540 0a270 135 0 1 0-540 0z"/>
    <g class="blot"><ellipse cx="450" cy="440" rx="24" ry="12"/><ellipse cx="520" cy="410" rx="24" ry="12"/><ellipse cx="600" cy="380" rx="24" ry="10"/><ellipse cx="660" cy="360" rx="24" ry="10"/><ellipse cx="810" cy="355" rx="24" ry="10"/><ellipse cx="870" cy="350" rx="22" ry="10"/><ellipse cx="755" cy="405" rx="24" ry="12"/><ellipse cx="815" cy="415" rx="24" ry="12"/><ellipse cx="990" cy="345" rx="22" ry="10"/><ellipse cx="1075" cy="395" rx="22" ry="12"/><ellipse cx="1125" cy="360" rx="18" ry="10"/><ellipse cx="1205" cy="400" rx="16" ry="12"/><ellipse cx="1285" cy="470" rx="18" ry="10"/><ellipse cx="1195" cy="495" rx="24" ry="12"/><ellipse cx="1300" cy="505" rx="20" ry="10"/><ellipse cx="1140" cy="600" rx="28" ry="12"/><ellipse cx="1225" cy="570" rx="24" ry="12"/><ellipse cx="1065" cy="640" rx="26" ry="12"/><ellipse cx="1010" cy="680" rx="22" ry="10"/><ellipse cx="940" cy="700" rx="22" ry="10"/><ellipse cx="1110" cy="710" rx="22" ry="12"/><ellipse cx="1175" cy="690" rx="22" ry="10"/><ellipse cx="1065" cy="685" rx="18" ry="12"/><ellipse cx="1215" cy="745" rx="22" ry="10"/><ellipse cx="990" cy="785" rx="20" ry="12"/><ellipse cx="935" cy="770" rx="24" ry="16"/><ellipse cx="930" cy="815" rx="20" ry="12"/><ellipse cx="850" cy="815" rx="28" ry="14"/><ellipse cx="870" cy="745" rx="28" ry="12"/><ellipse cx="790" cy="780" rx="20" ry="14"/><ellipse cx="730" cy="825" rx="20" ry="12"/><ellipse cx="685" cy="780" rx="22" ry="14"/><ellipse cx="600" cy="765" rx="22" ry="14"/><ellipse cx="550" cy="820" rx="16" ry="12"/><ellipse cx="505" cy="770" rx="22" ry="12"/><ellipse cx="660" cy="735" rx="16" ry="12"/><ellipse cx="600" cy="705" rx="14" ry="12"/><ellipse cx="740" cy="735" rx="14" ry="14"/><ellipse cx="460" cy="695" rx="26" ry="12"/><ellipse cx="515" cy="640" rx="22" ry="14"/><ellipse cx="375" cy="735" rx="26" ry="14"/><ellipse cx="400" cy="670" rx="20" ry="12"/><ellipse cx="360" cy="640" rx="22" ry="12"/><ellipse cx="415" cy="590" rx="28" ry="12"/><ellipse cx="470" cy="520" rx="24" ry="12"/><ellipse cx="335" cy="520" rx="18" ry="10"/><ellipse cx="400" cy="480" rx="14" ry="10"/><ellipse cx="540" cy="490" rx="22" ry="12"/><ellipse cx="635" cy="470" rx="20" ry="12"/><ellipse cx="695" cy="435" rx="20" ry="10"/><ellipse cx="590" cy="440" rx="16" ry="12"/><ellipse cx="1125" cy="510" rx="18" ry="10"/><ellipse cx="1205" cy="565" rx="16" ry="10"/><ellipse cx="1050" cy="400" rx="16" ry="10"/><ellipse cx="630" cy="825" rx="12" ry="12"/><ellipse cx="1285" cy="580" rx="14" ry="12"/><ellipse cx="1180" cy="720" rx="16" ry="12"/></g>
    <path class="t-slot" d="M735 695 800 580 820 575 750 700z"/>
    <path class="t-slot2" d="M820 570 885 450 912 448 840 575z"/>
    <path class="t-fan" d="M560 595Q820 550 1070 575M640 510 815 580 930 470M1000 520 820 580M905 450V620M1085 580 1000 470"/>
  </g>
  <g>
    <use href="#xm" x="915" y="812"/><use href="#xm" x="524" y="936"/><use href="#xm" x="1128" y="976"/><use href="#xm" x="663" y="1149"/><use href="#xm" x="752" y="1151"/><use href="#xm" x="743" y="1208"/><use href="#xm" x="947" y="1165"/><use href="#xm" x="1037" y="1175"/><use href="#xm" x="970" y="1224"/><use href="#xm" x="670" y="1323"/><use href="#xm" x="1084" y="1354"/><use href="#xm" x="869" y="1342"/><use href="#xm" x="884" y="1343"/><use href="#xm" x="591" y="1079"/><use href="#xm" x="709" y="1122"/><use href="#xm" x="1242" y="815"/><use href="#xm" x="1893" y="853"/><use href="#xm" x="2573" y="893"/>
  </g>
  <path class="axes" d="M191 1832V1882H252"/>
</svg>
</div>
<div class="vtabs"><span class="vt on">Perspective</span><span class="vt">Top</span><span class="vt">Front</span><span class="vt">Right</span><span class="vt add"><svg class="plus" viewBox="0 0 20 24"><path d="M7 2h6v7h6v6h-6v7H7v-7H1V9h6z"/></svg></span></div>
</div>

<aside class="panel">
<div class="ptabs">
<span class="pt on"><svg><use href="#t24"/></svg>Pro...</span><span class="pt"><svg><use href="#t23"/></svg>Lay...</span><span class="pt"><svg><use href="#p2"/></svg>Ren...</span><span class="pt"><svg><use href="#p3"/></svg>Ma...</span><span class="pt"><svg><use href="#t1"/></svg>Libr...</span><span class="pt"><svg><use href="#p5"/></svg>Help</span>
<svg class="pgear" viewBox="0 0 48 48"><use href="#gear"/></svg>
</div>
<div class="pbody">
<div class="subbtns"><span class="sb on"><svg><use href="#cam"/></svg></span><span class="sb"><svg><use href="#frm"/></svg></span><span class="sb"><svg><use href="#sph"/></svg></span></div>
<div class="props">
<h3>Viewport</h3>
<div class="row"><i></i><span>Title</span><span class="v">Perspective</span></div>
<div class="row dis"><i></i><span>Width</span><span class="v">3039</span></div>
<div class="row dis"><i></i><span>Height</span><span class="v">1658</span></div>
<div class="row"><i></i><span>Projection</span><span class="v drop">Perspective<em class="dd"><svg viewBox="0 0 16 10"><path d="M2 2l6 6 6-6"/></svg></em></span></div>
<h3>Camera</h3>
<div class="row"><i></i><span>Lens Length</span><span class="v">50.0</span></div>
<div class="row"><i></i><span>Rotation</span><span class="v">0.0</span></div>
<div class="row"><i></i><span>X Location</span><span class="v">1144.414</span></div>
<div class="row"><i></i><span>Y Location</span><span class="v">-2774.445</span></div>
<div class="row"><i></i><span>Z Location</span><span class="v">1645.72</span></div>
<div class="row ro"><i></i><span>Distance to Target</span><span class="v">2899.629</span></div>
<div class="row"><i></i><span>Location</span><span class="v btn">Place...</span></div>
<h3>Target</h3>
<div class="row"><i></i><span>X Target</span><span class="v">837.599</span></div>
<div class="row"><i></i><span>Y Target</span><span class="v">-345.513</span></div>
<div class="row"><i></i><span>Z Target</span><span class="v">92.013</span></div>
<div class="row"><i></i><span>Location</span><span class="v btn">Place...</span></div>
<h3>Wallpaper</h3>
<div class="row"><i></i><span>Filename</span><span class="v drop">(none)<em class="dots">...</em></span></div>
<div class="row"><i></i><span>Show</span><span class="v"><u class="ck"><svg viewBox="0 0 24 24"><path d="M5 12l5 7 9-15"/></svg></u></span></div>
<div class="row"><i></i><span>Gray</span><span class="v"><u class="ck"><svg viewBox="0 0 24 24"><path d="M5 12l5 7 9-15"/></svg></u></span></div>
</div>
</div>
</aside>
</div>

<div class="osnap">
<label><u class="ck"><svg viewBox="0 0 24 24"><path d="M5 12l5 7 9-15"/></svg></u>End</label>
<label><u class="ck"><svg viewBox="0 0 24 24"><path d="M5 12l5 7 9-15"/></svg></u>Near</label>
<label><u class="ck"></u>Point</label>
<label><u class="ck"><svg viewBox="0 0 24 24"><path d="M5 12l5 7 9-15"/></svg></u>Mid</label>
<label><u class="ck"></u>Cen</label>
<label><u class="ck"><svg viewBox="0 0 24 24"><path d="M5 12l5 7 9-15"/></svg></u>Int</label>
<label><u class="ck"></u>Perp</label>
<label><u class="ck"></u>Tan</label>
<label><u class="ck"><svg viewBox="0 0 24 24"><path d="M5 12l5 7 9-15"/></svg></u>Quad</label>
<label><u class="ck"></u>Knot</label>
<label><u class="ck"></u>Vertex</label>
<label><u class="ck off"></u>Project</label>
<label><u class="ck off"></u>Disable</label>
<label><u class="ck"><svg viewBox="0 0 24 24"><path d="M5 12l5 7 9-15"/></svg></u>Points</label>
<label><u class="ck"><svg viewBox="0 0 24 24"><path d="M5 12l5 7 9-15"/></svg></u>Curves</label>
<label><u class="ck"><svg viewBox="0 0 24 24"><path d="M5 12l5 7 9-15"/></svg></u>Surfaces</label>
<label><u class="ck"><svg viewBox="0 0 24 24"><path d="M5 12l5 7 9-15"/></svg></u>Polysurfaces</label>
<label><u class="ck"><svg viewBox="0 0 24 24"><path d="M5 12l5 7 9-15"/></svg></u>Meshes</label>
<label><u class="ck"><svg viewBox="0 0 24 24"><path d="M5 12l5 7 9-15"/></svg></u>Annotations</label>
<label><u class="ck"><svg viewBox="0 0 24 24"><path d="M5 12l5 7 9-15"/></svg></u>Lights</label>
<label><u class="ck"><svg viewBox="0 0 24 24"><path d="M5 12l5 7 9-15"/></svg></u>Blocks</label>
<label><u class="ck"><svg viewBox="0 0 24 24"><path d="M5 12l5 7 9-15"/></svg></u>Control Points</label>
<label><u class="ck"><svg viewBox="0 0 24 24"><path d="M5 12l5 7 9-15"/></svg></u>Point Clouds</label>
<label><u class="ck"><svg viewBox="0 0 24 24"><path d="M5 12l5 7 9-15"/></svg></u>Hatches</label>
<label><u class="ck"><svg viewBox="0 0 24 24"><path d="M5 12l5 7 9-15"/></svg></u>Others</label>
<label><u class="ck off"></u>Disable</label>
<label><u class="ck off"></u>Sub-objects</label>
</div>

<footer class="status">
<span class="l">CPlane</span><span>x 2017.391</span><span>y -359.707</span><span>z 0.000</span><span>Millimeters</span><span class="l layer"><i class="swatch"></i>Default</span><span>Grid Snap</span><span>Ortho</span><span>Planar</span><span class="act">Osnap</span><span class="act">SmartTrack</span><span class="act">Gumball</span><span>Record History</span><span>Filter</span><span class="l cpu">CPU use: 18.2 %</span>
</footer>
</div>
</body>
</html>
```

FILE: styles.css
```css
* { box-sizing: border-box; }
html, body { margin: 0; padding: 0; }
body { width: 3840px; height: 2080px; overflow: hidden; background: #e9ebef; font-family: "Open Sans", "Liberation Sans", sans-serif; font-size: 22px; color: #222; }
.defs { position: absolute; width: 0; height: 0; }
.qm { font: bold 36px "Open Sans", sans-serif; fill: #fff; }
.qm2 { font: bold 30px "Open Sans", sans-serif; fill: #fff; }
.six { font: bold 18px "Liberation Serif", serif; fill: #fff; }
.app { width: 3840px; height: 2080px; display: flex; flex-direction: column; }

.titlebar { height: 44px; background: #fff; display: flex; align-items: center; padding-left: 2px; color: #8c8c8c; }
.logo { width: 32px; height: 38px; margin-top: 2px; }
.title { margin-left: 6px; font-size: 23px; }
.winctl { margin-left: auto; display: flex; gap: 70px; margin-right: 38px; margin-top: -2px; }
.wc { width: 22px; height: 22px; fill: none; stroke: #888; stroke-width: 1.6; }

.menubar { height: 39px; background: #fff; display: flex; align-items: center; gap: 14.6px; padding-left: 8px; color: #555; font-size: 22.5px; }

.cmd { margin-top: 4px; height: 95px; padding-left: 13px; display: flex; flex-direction: column; background: #eee; }
.hist { height: 59px; display: flex; border-bottom: 2px solid #c8c9d0; background: #fff; }
.histtext { flex: 1; height: 57px; overflow: hidden; padding: 2px 0 0 1px; line-height: 32px; white-space: pre; color: #111; font-size: 23px; }
.histscroll { width: 34px; background: #eee; display: flex; flex-direction: column; align-items: center; justify-content: space-around; padding: 4px 0; }
.chev { width: 14px; height: 10px; fill: none; stroke: #444; stroke-width: 2.2; }
.prompt { height: 36px; background: #fff; display: flex; align-items: center; padding-left: 1px; color: #000; position: relative; font-size: 23px; }
.prompt b { font-weight: 700; }
.spin { margin-left: auto; width: 30px; height: 33px; display: flex; flex-direction: column; margin-right: 2px; background: #eee; }
.spin span { flex: 1; border: 1px solid #999; position: relative; background: #f0f0f0; }
.spin span::after { content: ""; position: absolute; left: 7px; top: 4px; width: 14px; height: 8px; background: #111; }
.spin .up::after { clip-path: polygon(50% 0, 100% 100%, 0 100%); }
.spin .dn::after { clip-path: polygon(0 0, 100% 0, 50% 100%); }

.tabs { height: 46px; padding: 7px 0 0 15px; display: flex; border-bottom: 2px solid #cfd1d6; position: relative; background: #e9ebef; font-size: 23px; }
.tab { height: 38px; padding: 0 24.5px 0 23.5px; line-height: 36px; background: #d8d9db; margin-right: 1px; clip-path: polygon(0 100%, 12px 3px, 15px 0, calc(100% - 3px) 0, 100% 3px, 100% 100%); color: #111; }
.tab.on { background: #eef0f3; }
.tabgear { position: absolute; right: 3px; top: 10px; width: 28px; height: 28px; color: #a3a5a8; }

.toolbar { height: 66px; padding: 1px 0 0 11px; display: flex; background: #e9ebef; }
.b { width: 56px; height: 56px; flex: none; display: flex; align-items: center; justify-content: center; position: relative; font-style: normal; }
.b svg { width: 48px; height: 48px; }
.f::after { content: ""; position: absolute; left: 42px; top: 42px; width: 12px; height: 12px; background: #6a6b6e; clip-path: polygon(100% 0, 100% 100%, 0 100%); }

.main { flex: 1; min-height: 0; display: flex; }
.lefttb { width: 121px; padding-top: 11px; display: grid; grid-template-columns: 56px 56px; grid-auto-rows: 56px; align-content: start; }
.center { width: 3039px; display: flex; flex-direction: column; padding-top: 1px; }
.viewport { height: 1658px; background: #9aa1aa; position: relative; }
.scene { display: block; width: 3039px; height: 1658px; }
.vtab { position: absolute; left: 0; top: 0; height: 33px; width: 173px; background: #bcd2ea; padding-left: 10px; line-height: 31px; color: #111; z-index: 1; }
.vcaret { position: absolute; left: 154px; top: 13px; width: 12px; height: 6px; background: #222; clip-path: polygon(0 0, 100% 0, 50% 100%); }

.wire path { fill: none; stroke: #8e1c2a; stroke-width: 1.6; }
.plate path, .plate ellipse { fill: #a06268; stroke: #8b1a22; stroke-width: 2px; vector-effect: non-scaling-stroke; }
.holes ellipse { fill: #9aa1aa; stroke: #8b1a22; stroke-width: 1.2px; vector-effect: non-scaling-stroke; transform-box: fill-box; transform-origin: center; transform: scale(1.24); }
.slot { fill: #9aa1aa; stroke: #8b1a22; stroke-width: 1.2px; vector-effect: non-scaling-stroke; }
.plate2 { fill: #a06268; stroke: #8b0e1c; stroke-width: 1.8px; vector-effect: non-scaling-stroke; }
.t-plate { fill: #a03c42; stroke: #8f0a10; stroke-width: 2px; vector-effect: non-scaling-stroke; }
.t-line { fill: none; stroke: #930b10; stroke-width: 1.2px; vector-effect: non-scaling-stroke; }
.t-corner { fill: #b04c4e; }
.t-flank { fill: #8c2428; stroke: #8f0a10; stroke-width: 1.5px; vector-effect: non-scaling-stroke; }
.t-solid { fill: #8f0000; }
.t-leg { fill: #550000; }
.t-lit { fill: #ad3a42; stroke: #8f0a10; stroke-width: 1px; vector-effect: non-scaling-stroke; }
.t-foot { fill: #4a2026; stroke: #6a0b10; stroke-width: 1px; vector-effect: non-scaling-stroke; }
.t-disc { fill: rgba(128, 10, 16, .62); stroke: #87141a; stroke-width: 1.5px; vector-effect: non-scaling-stroke; }
.t-disc2 { fill: #8e0505; stroke: #7f0a0e; stroke-width: 1.5px; vector-effect: non-scaling-stroke; }
.t-ring { fill: url(#wire); }
.t-ring2 { fill: url(#wire2); }
.blot ellipse { fill: #552025; opacity: .8; transform-box: fill-box; transform-origin: center; transform: rotate(-28deg) scale(1.2); }
.t-slot { fill: #6e0606; }
.t-slot2 { fill: #7f2328; }
.t-fan { fill: none; stroke: #a71c1c; stroke-width: 1.2px; vector-effect: non-scaling-stroke; }
.axes { fill: none; stroke: #7e848c; stroke-width: 1.5; }

.vtabs { margin-top: 2px; height: 39px; display: flex; }
.vt { height: 39px; line-height: 36px; background: #d6d7d9; text-align: center; clip-path: polygon(0 0, 100% 0, 100% calc(100% - 3px), calc(100% - 3px) 100%, 18px 100%); color: #111; width: 88px; padding-left: 14px; }
.vt:nth-child(1) { width: 150px; background: #f3f4f6; padding-left: 12px; }
.vt:nth-child(2) { width: 71px; }
.vt:nth-child(4) { width: 87px; }
.vt.add { width: 58px; background: #f0f1f4; }
.plus { width: 18px; height: 24px; margin-top: 8px; fill: none; stroke: #aaa; stroke-width: 1.6; }

.panel { width: 672px; margin-left: 8px; padding-top: 7px; height: 1698px; display: flex; flex-direction: column; }
.ptabs { height: 49px; padding-top: 7px; border-top: 2px solid #d4d6e0; display: flex; position: relative; }
.pt { width: 105px; height: 42px; flex: none; display: flex; align-items: center; gap: 3px; padding-left: 4px; background: #d8d9db; clip-path: polygon(0 100%, 0 8px, 8px 0, 78% 0, 100% 100%); margin-right: 1px; color: #111; font-size: 22px; overflow: hidden; white-space: nowrap; }
.pt.on { background: #f5f6f8; }
.pt svg { width: 34px; height: 34px; flex: none; }
.pgear { position: absolute; right: 4px; top: 12px; width: 28px; height: 28px; color: #b9bbbe; }
.pbody { flex: 1; background: #f5f6f8; border: 1px solid #c8cadb; padding: 4px 10px 0 4px; }
.subbtns { display: flex; gap: 4px; height: 50px; }
.sb { width: 50px; height: 50px; background: #dfe0e2; border: 1px solid #b8b9bb; display: flex; align-items: center; justify-content: center; }
.sb.on { background: #b6d4ee; border-color: #5a8fc0; }
.sb svg { width: 42px; height: 42px; }
.props { margin-top: 6px; }
.props h3 { margin: 0; height: 47px; padding: 6px 0 0 3px; font-size: 25px; font-weight: 400; line-height: 32px; color: #111; border-top: 1px solid #eceded; }
.row { height: 38px; display: grid; grid-template-columns: 35px 293px 328px; line-height: 35px; color: #333; }
.row > i { background: #f5f6f8; border-bottom: 1px solid #e8e9ec; }
.row > span { background: #fff; padding-left: 5px; border-bottom: 1px solid #e8e9ec; }
.row .v { border-left: 1px solid #e4e5e8; position: relative; color: #222; }
.row.dis span { color: #7c7c7c; }
.row.dis .v { background: #e9ebef; color: #7c7c7c; border-bottom: 0; }
.row.ro .v { background: #e9ebef; border-bottom: 0; }
.row .btn { background: #dfe0e2; text-align: center; border: 1px solid #bcbdbf; border-bottom: 2px solid #aeafb2; margin: 2px 0 0 2px; line-height: 31px; height: 36px; padding: 0; }
.dd { position: absolute; right: 0; top: 0; width: 37px; height: 37px; background: #e2e3e5; border-left: 1px solid #bbb; display: flex; align-items: center; justify-content: center; }
.dd svg { width: 14px; height: 9px; fill: none; stroke: #444; stroke-width: 1.3; }
.dots { position: absolute; right: 0; top: 2px; width: 36px; height: 36px; background: #e2e3e5; border: 1px solid #aaa; text-align: center; line-height: 30px; font-style: normal; }
.ck { display: inline-block; flex: none; width: 25px; height: 25px; border: 2px solid #333; background: #f6f7f9; text-decoration: none; }
.ck svg { display: block; width: 21px; height: 21px; fill: none; stroke: #555; stroke-width: 1.2; }
.ck.off { background: #e3e4e6; border-color: #bdbec1; border-width: 1px; }
.row .ck { margin: 5px 0 0 1px; vertical-align: top; }

.osnap { height: 53px; padding: 16px 0 0 18px; display: grid; grid-template-columns: 86px 98px 101px 87px 89px 73px 95px 85px 104px 96px 114px 138px 293px 204px 190px 202px 177px 128px 174px 110px 113px 196px 182px 131px 117px 124px auto; border-bottom: 2px solid #c9cbdc; position: relative; }
.osnap label { display: flex; align-items: flex-start; gap: 7px; line-height: 26px; color: #222; white-space: nowrap; }
.osnap::before, .osnap::after { content: ""; position: absolute; top: 7px; height: 38px; width: 2px; background: #d7d9dd; }
.osnap::before { left: 8px; }
.osnap::after { left: 1466px; }

.status { height: 31px; background: #eff0f2; display: grid; grid-template-columns: 91px 169px 168px 167px 169px 327px 125px 84px 82px 88px 138px 109px 176px 74px 1fr; line-height: 28px; color: #222; font-size: 22.6px; }
.status span { text-align: center; border-right: 1px solid #d8d9dd; white-space: nowrap; }
.status .l { text-align: left; padding-left: 8px; }
.status .layer { display: flex; align-items: flex-start; gap: 5px; padding-left: 6px; }
.swatch { width: 19px; height: 21px; background: #000; margin-top: 5px; flex: none; }
.status .act { background: #e6f1fb; font-weight: 700; letter-spacing: -.4px; }
.status .cpu { padding-left: 1px; border: 0; }
```
